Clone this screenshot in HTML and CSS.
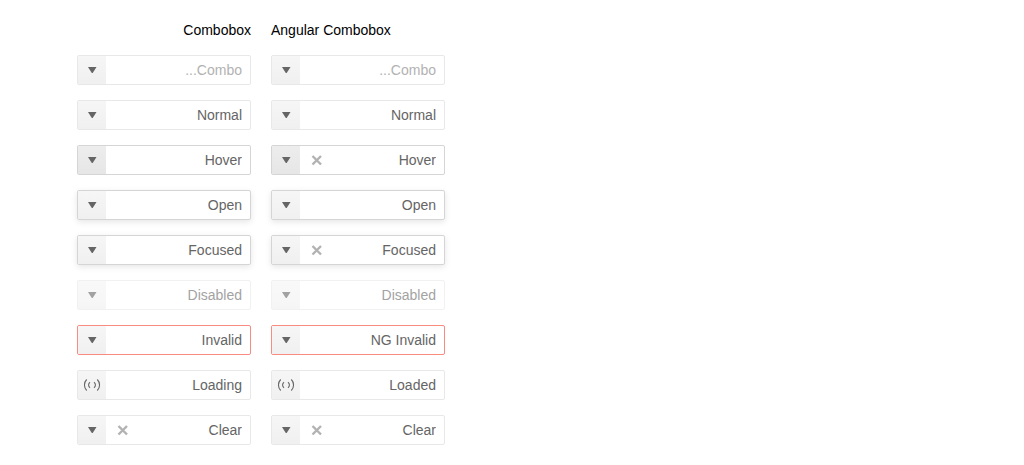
FILE: index.html
```html
<!DOCTYPE html>
<html lang="en">
<head>
<meta charset="utf-8">
<title>Combobox</title>
<link rel="stylesheet" href="styles.css">
</head>
<body>
<svg class="sprite" aria-hidden="true">
  <symbol id="arrow" viewBox="0 0 18 14"><path d="M5 4h8.500L9.700 10h-.9z"/></symbol>
  <symbol id="cross" viewBox="0 0 12 12"><path d="M1.500 2l8.500 8.500M10 2l-8.500 8.500" fill="none" stroke="currentColor" stroke-width="2.400"/></symbol>
  <symbol id="loading" viewBox="0 0 18 14"><path d="M3.700 1.500C.7 4.500.7 9.500 3.700 12.500M14.300 1.500c3 3 3 8 0 11M7 4.200c-1.900 1.500-1.900 4.100 0 5.600M11 4.200c1.900 1.500 1.900 4.100 0 5.600" fill="none" stroke="currentColor" stroke-width="1.100"/></symbol>
</svg>
<main class="demo">
  <section class="column">
    <h2 class="title title-end">Combobox</h2>
    <div class="combo"><button class="trigger" aria-label="Open list"><svg class="icon"><use href="#arrow"/></svg></button><input class="field" dir="rtl" aria-label="Combo" placeholder="Combo..."></div>
    <div class="combo"><button class="trigger" aria-label="Open list"><svg class="icon"><use href="#arrow"/></svg></button><input class="field" dir="rtl" aria-label="Normal" value="Normal"></div>
    <div class="combo is-hover"><button class="trigger" aria-label="Open list"><svg class="icon"><use href="#arrow"/></svg></button><input class="field" dir="rtl" aria-label="Hover" value="Hover"></div>
    <div class="combo is-raised"><button class="trigger" aria-label="Open list"><svg class="icon"><use href="#arrow"/></svg></button><input class="field" dir="rtl" aria-label="Open" value="Open"></div>
    <div class="combo is-raised"><button class="trigger" aria-label="Open list"><svg class="icon"><use href="#arrow"/></svg></button><input class="field" dir="rtl" aria-label="Focused" value="Focused"></div>
    <div class="combo is-disabled"><button class="trigger" aria-label="Open list" disabled><svg class="icon"><use href="#arrow"/></svg></button><input class="field" dir="rtl" aria-label="Disabled" value="Disabled" disabled></div>
    <div class="combo is-invalid"><button class="trigger" aria-label="Open list"><svg class="icon"><use href="#arrow"/></svg></button><input class="field" dir="rtl" aria-label="Invalid" value="Invalid" aria-invalid="true"></div>
    <div class="combo"><button class="trigger" aria-label="Loading list"><svg class="icon"><use href="#loading"/></svg></button><input class="field" dir="rtl" aria-label="Loading" value="Loading"></div>
    <div class="combo"><button class="trigger" aria-label="Open list"><svg class="icon"><use href="#arrow"/></svg></button><button class="clear" aria-label="Clear"><svg class="icon-cross"><use href="#cross"/></svg></button><input class="field" dir="rtl" aria-label="Clear value" value="Clear"></div>
  </section>
  <section class="column">
    <h2 class="title">Angular Combobox</h2>
    <div class="combo"><button class="trigger" aria-label="Open list"><svg class="icon"><use href="#arrow"/></svg></button><input class="field" dir="rtl" aria-label="Combo" placeholder="Combo..."></div>
    <div class="combo"><button class="trigger" aria-label="Open list"><svg class="icon"><use href="#arrow"/></svg></button><input class="field" dir="rtl" aria-label="Normal" value="Normal"></div>
    <div class="combo is-hover"><button class="trigger" aria-label="Open list"><svg class="icon"><use href="#arrow"/></svg></button><button class="clear" aria-label="Clear"><svg class="icon-cross"><use href="#cross"/></svg></button><input class="field" dir="rtl" aria-label="Hover" value="Hover"></div>
    <div class="combo is-raised"><button class="trigger" aria-label="Open list"><svg class="icon"><use href="#arrow"/></svg></button><input class="field" dir="rtl" aria-label="Open" value="Open"></div>
    <div class="combo is-raised"><button class="trigger" aria-label="Open list"><svg class="icon"><use href="#arrow"/></svg></button><button class="clear" aria-label="Clear"><svg class="icon-cross"><use href="#cross"/></svg></button><input class="field" dir="rtl" aria-label="Focused" value="Focused"></div>
    <div class="combo is-disabled"><button class="trigger" aria-label="Open list" disabled><svg class="icon"><use href="#arrow"/></svg></button><input class="field" dir="rtl" aria-label="Disabled" value="Disabled" disabled></div>
    <div class="combo is-invalid"><button class="trigger" aria-label="Open list"><svg class="icon"><use href="#arrow"/></svg></button><input class="field" dir="rtl" aria-label="NG Invalid" value="NG Invalid" aria-invalid="true"></div>
    <div class="combo"><button class="trigger" aria-label="Loading list"><svg class="icon"><use href="#loading"/></svg></button><input class="field" dir="rtl" aria-label="Loaded" value="Loaded"></div>
    <div class="combo"><button class="trigger" aria-label="Open list"><svg class="icon"><use href="#arrow"/></svg></button><button class="clear" aria-label="Clear"><svg class="icon-cross"><use href="#cross"/></svg></button><input class="field" dir="rtl" aria-label="Clear value" value="Clear"></div>
  </section>
</main>
</body>
</html>
```

FILE: styles.css
```css
* {
  box-sizing: border-box;
}

body {
  margin: 0;
  background: #fff;
  color: #000;
  font: 14px/20px "Liberation Sans", Arial, sans-serif;
}

.sprite {
  display: none;
}

.demo {
  display: grid;
  grid-template-columns: repeat(2, 174px);
  column-gap: 20px;
  padding: 20px 77px;
}

.column {
  display: flex;
  flex-direction: column;
  gap: 15px;
}

.title {
  margin: 0;
  font-size: 14px;
  font-weight: 400;
}

.title-end {
  text-align: right;
}

.combo {
  display: flex;
  height: 30px;
  overflow: hidden;
  border: 1px solid #e8e8e8;
  border-radius: 2px;
  background: #fff;
  color: #656565;
}

.trigger,
.clear {
  display: flex;
  flex: none;
  align-items: center;
  justify-content: center;
  padding: 0;
  border: 0;
  color: inherit;
}

.trigger {
  width: 28px;
  background: linear-gradient(#f6f6f6, #f0f0f0);
}

.clear {
  width: 34px;
  background: transparent;
  color: #b2b2b2;
}

.icon {
  width: 18px;
  height: 14px;
  fill: currentColor;
}

.icon-cross {
  width: 12px;
  height: 12px;
}

.field {
  flex: 1;
  min-width: 0;
  padding: 0 8px;
  border: 0;
  outline: 0;
  background: transparent;
  color: inherit;
  font: inherit;
}

.field::placeholder {
  color: #b2b2b2;
  opacity: 1;
}

.is-hover,
.is-raised {
  border-color: #d5d5d5;
}

.is-hover .trigger {
  background: linear-gradient(#ededed, #e6e6e6);
}

.is-raised {
  box-shadow: 0 2px 6px rgba(0, 0, 0, 0.1);
}

.is-disabled {
  opacity: 0.6;
}

.is-invalid {
  border-color: #f98b81;
}
```
